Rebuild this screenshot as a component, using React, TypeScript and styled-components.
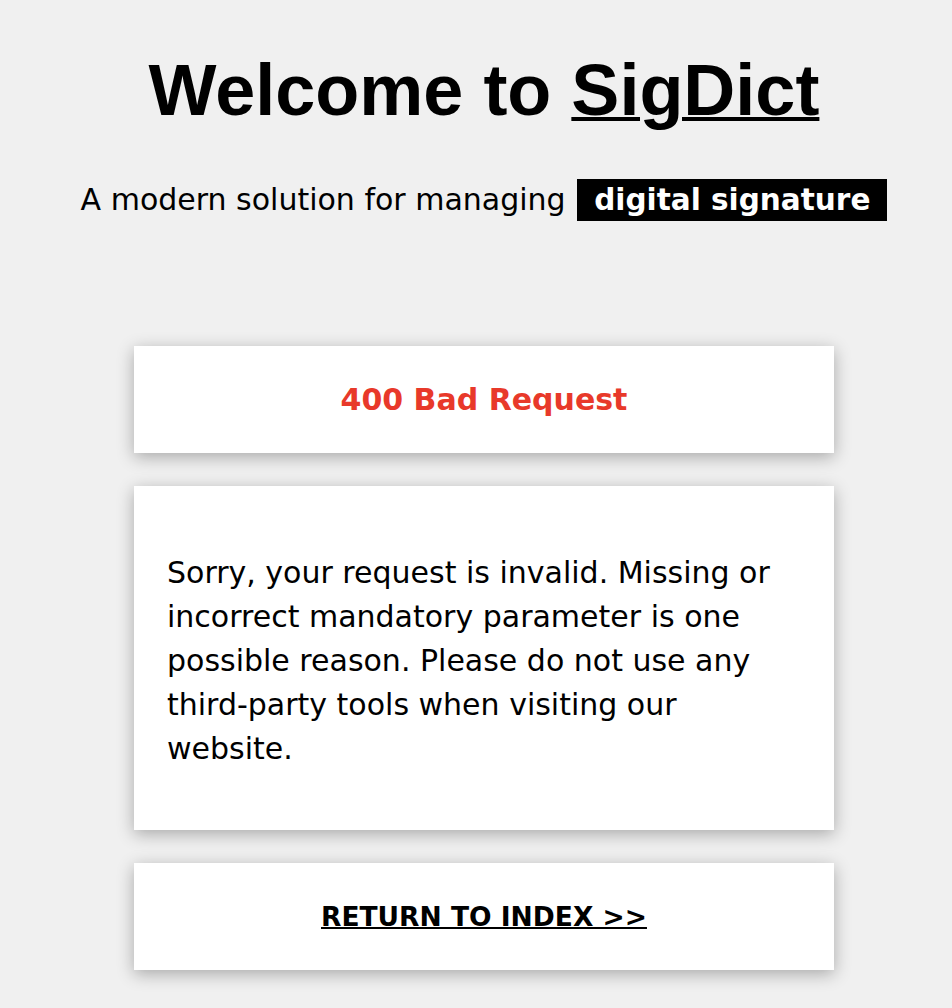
import * as React from 'react';
import styled, { createGlobalStyle } from 'styled-components';

const GlobalStyle = createGlobalStyle`
    body {
        margin: 0;
        background: #f0f0f0;
        font-family: "DejaVu Sans", Verdana, sans-serif;
        color: #000;
    }
`

const Page = styled.div`
    padding: 0 0 40px 16px;
    display: flex;
    flex-direction: column;
    align-items: center;
`

const Title = styled.h1`
    font-family: "Liberation Sans", Arial, sans-serif;
    font-weight: 700;
    font-size: 72px;
    margin: 48px 0 0;
    line-height: 84px;
    a {
        color: #000;
        text-decoration: underline;
        text-decoration-thickness: 4px;
    }
`

const Tagline = styled.p`
    font-size: 30px;
    margin: 47px 0 0;
    line-height: 42px;
`

const Badge = styled.span`
    background: #000;
    color: #fff;
    font-weight: 700;
    font-size: 29.5px;
    padding: 4px 17px;
    margin-left: 2px;
`

const Cards = styled.div`
    margin-top: 125px;
    width: 700px;
    display: flex;
    flex-direction: column;
    gap: 33px;
`

const Card = styled.div<{ $pad?: string }>`
    background: #fff;
    box-shadow: 0 4px 16px rgba(0, 0, 0, 0.3);
    padding: ${p => p.$pad || '0 32px'};
    min-height: 107px;
    display: flex;
    align-items: center;
    justify-content: center;
`

const ErrorCode = styled.h2`
    color: #e8392a;
    font-size: 30px;
    font-weight: 700;
    margin: 0;
`

const Message = styled.p`
    font-size: 30px;
    line-height: 44px;
    margin: 33px 0 27px;
`

const BackLink = styled.a`
    color: #000;
    font-size: 26.5px;
    font-weight: 700;
    text-decoration: underline;
    text-decoration-thickness: 2px;
`

const App = () => {
    return (
        <>
            <GlobalStyle />
            <Page>
                <Title>Welcome to <a href="#">SigDict</a></Title>
                <Tagline>A modern solution for managing <Badge>digital signature</Badge></Tagline>
                <Cards>
                    <Card>
                        <ErrorCode>400 Bad Request</ErrorCode>
                    </Card>
                    <Card $pad="32px 33px">
                        <Message>
                            Sorry, your request is invalid. Missing or incorrect mandatory parameter is one possible reason. Please do not use any third&#8209;party tools when visiting our website.
                        </Message>
                    </Card>
                    <Card>
                        <BackLink href="#">RETURN TO INDEX &gt;&gt;</BackLink>
                    </Card>
                </Cards>
            </Page>
        </>
    );
};

export default App;
